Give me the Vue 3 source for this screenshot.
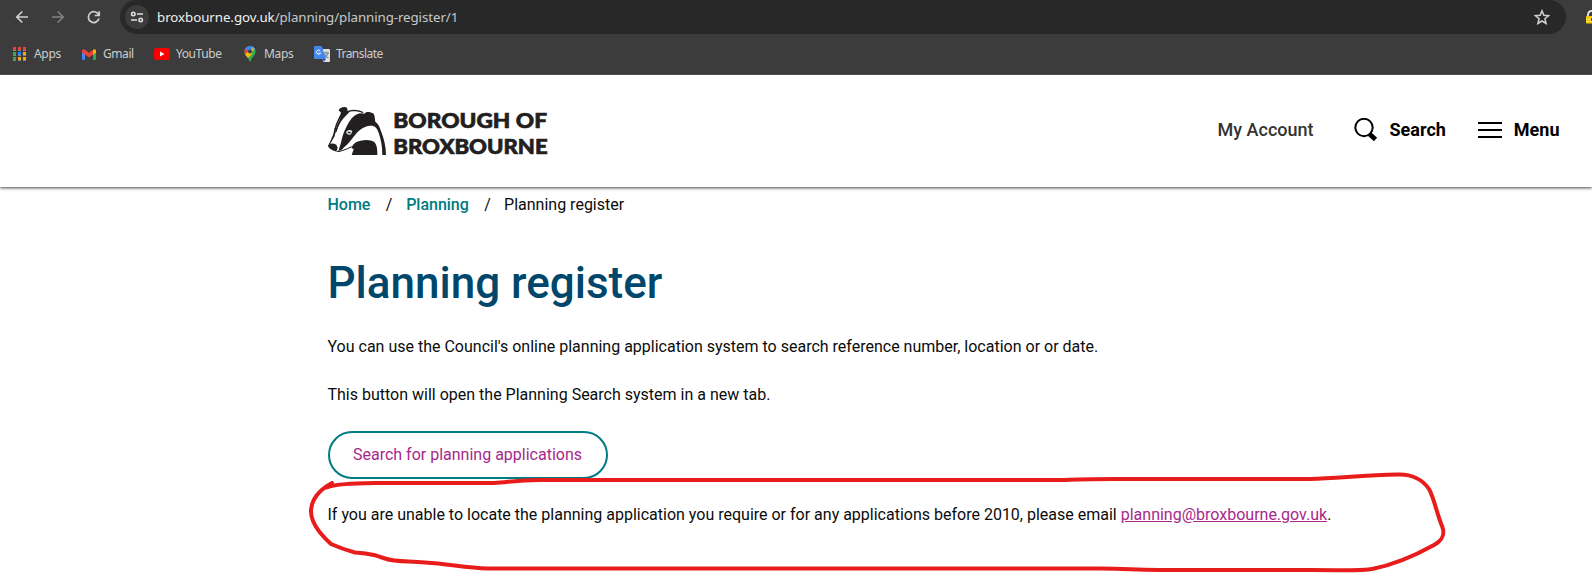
<script setup>
const outline =
  'M332 483 L326 487.500 C337 484 350 483.500 375 483 H494 C508 482.500 515 480 540 480 H1065 C1080 479 1095 479 1115 479 H1310 C1340 478 1365 475 1398 474.500 C1412 474 1423 480 1429 489 C1434 498 1437 514 1442 526 C1446 536 1441 541 1434 545 C1416 555 1393 565 1372 569 C1362 571 1345 570 1310 570 H1160 C1130 570 1130 568.500 1100 568.500 H488 C465 568 450 564 425 562.500 C405 561 395 562 385 558.500 C375 555 372 554 355 552.500 Q342 549 331 544 C321 535 315 526 313 521 C307 506 315 492 332 483'
</script>

<template>
  <div class="page">
    <div class="browser">
      <div class="toolbar">
        <svg class="nav" width="120" height="34" viewBox="0 0 120 34" fill="none" stroke-width="1.7">
          <path d="M28 17H17M22.300 11.500L16.800 17l5.500 5.500" stroke="#d0d0d0" />
          <path d="M52 17h11M57.700 11.500l5.500 5.500-5.500 5.500" stroke="#828282" />
          <path d="M98.500 14.500A5.400 5.400 0 1 0 99 18.500M99.200 11.200v4.300h-4.500" stroke="#d0d0d0" />
        </svg>
        <div class="address">
          <svg class="site" width="24" height="24" viewBox="0 0 24 24" fill="none" stroke="#dedede" stroke-width="1.600">
            <circle cx="12" cy="12" r="12" fill="#3c3c3c" stroke="none" />
            <circle cx="8.300" cy="9" r="1.700" /><path d="M12 9h6M6 15h6" /><circle cx="15.700" cy="15" r="1.700" />
          </svg>
          <span class="url"><span class="host">broxbourne.gov.uk</span>/planning/planning-register/1</span>
          <svg class="star" width="16" height="16" viewBox="0 0 16 16" fill="none" stroke="#d0d0d0" stroke-width="1.500">
            <path d="M8 1.800l1.800 4.500 4.800.4-3.700 3.100 1.200 4.700L8 12l-4.100 2.500 1.200-4.700L1.400 6.700l4.800-.4z" />
          </svg>
        </div>
        <svg class="lock" width="6" height="16" viewBox="0 0 6 16">
          <path d="M2 8V5.500Q2.500 1.800 6 1.800" fill="none" stroke="#e8e8e8" stroke-width="1.800" />
          <rect y="7" width="8" height="7.500" rx=".7" fill="#f5c400" /><path d="M0 10h6M0 12.500h6" stroke="#ffe45b" /><path d="M5 9h1v3H5z" fill="#6d5300" />
        </svg>
      </div>
      <div class="bookmarks">
        <span class="mark apps">
          <svg width="13" height="14" viewBox="0 0 13 14">
            <path d="M0 0h3v3H0zM5 0h3v3H5zM10 0h3v3h-3z" fill="#ee4035" />
            <path d="M0 5h3v3H0zM0 10h3v3H0z" fill="#34a853" /><path d="M5 5h3v3H5z" fill="#2684fc" />
            <path d="M10 5h3v3h-3zM5 10h3v3H5zM10 10h3v3h-3z" fill="#fbab05" />
            <path d="M0 3.500h3m2 0h3m2 0h3M0 8.500h3m2 0h3m2 0h3M0 13.500h3m2 0h3m2 0h3" stroke="#858585" />
          </svg><span>Apps</span></span>
        <span class="mark gmail">
          <svg width="14" height="11" viewBox="0 0 14 11">
            <path d="M0 2l3 2v7H1Q0 11 0 10z" fill="#4285f4" /><path d="M11 4l3-2v8q0 1-1 1h-2z" fill="#34a853" />
            <path d="M11 .8Q14-.8 14 2v1.500l-3 2.300z" fill="#fbbc04" /><path d="M0 3.500V2Q0-.8 3 .8l4 3 4-3v5L7 8.500 3 5.800z" fill="#ea4335" />
          </svg><span>Gmail</span></span>
        <span class="mark youtube">
          <svg width="16" height="12" viewBox="0 0 16 12"><rect width="16" height="12" rx="3" fill="#f00" /><path d="M6 3.500L10.500 6 6 8.500z" fill="#fff" /></svg><span>YouTube</span></span>
        <span class="mark maps">
          <svg width="12" height="16" viewBox="0 0 12 16">
            <clipPath id="pin"><path d="M6 0a5.600 5.600 0 0 1 5.600 5.600C11.600 10 7.800 10.500 6.800 15q-.8 1.500-1.500 0C4.500 11 .4 10 .4 5.600A5.600 5.600 0 0 1 6 0z" /></clipPath>
            <g clip-path="url(#pin)"><path d="M0 0h12v16H0z" fill="#34a853" /><path d="M0 0h12L6 6 0 5z" fill="#4285f4" /><path d="M8 0h4v3L8 5z" fill="#72aaff" /><path d="M0 2l5 3-4 5H0z" fill="#ea4335" /><path d="M0 9l9-7-1 6-5 5z" fill="#fbbc04" /></g>
            <circle cx="6" cy="5.500" r="2" fill="#303b4d" />
          </svg><span>Maps</span></span>
        <span class="mark translate">
          <svg width="16" height="16" viewBox="0 0 16 16">
            <path d="M8 3h7q1 0 1 1v11q0 1-1 1H9z" fill="#dedede" /><path d="M9 7h6M12 5.500V7m2 0q-1 4-4 5m.5-4q1 3 4 4" stroke="#667c83" fill="none" />
            <path d="M1 0h6l1 1 4 12H1q-1 0-1-1V1q0-1 1-1z" fill="#4687ee" /><path d="M8.500 13H12l-2.300 3z" fill="#2759bd" />
            <path d="M6.300 5A2.100 2.100 0 1 0 6.500 7H4.600" stroke="#fff" fill="none" />
          </svg><span>Translate</span></span>
      </div>
    </div>

    <header class="header">
      <svg class="logo" width="226" height="62" viewBox="39 30 678 186" fill="#231f20">
        <path d="M41 148C46 140 49 130 54 120C58 105 60 91 67 77C73 65 76 59 78 53L71 46C73 38 87 33 96 38L98 48C114 42 134 44 146 52L143 54C132 49 115 48 105 50C93 53 82 61 73 75C64 91 62 111 59 124C51 137 49 142 45 148z" />
        <path d="M75 73C80 60 91 52 105 49L97 58C82 71 72 88 66 105L61 117C62 99 67 85 75 73z" />
        <path d="M39 150Q51 142 64 149L68 158Q67 167 61 169C50 165 39 160 39 150z" />
        <path d="M70 169L78 143C82 123 86 111 93 98C102 80 110 66 123 59Q136 53 148 56C153 48 166 50 176 56C180 63 179 70 181 80C191 87 194 96 199 111C207 132 213 155 213 180H202C202 155 198 133 191 113C186 98 179 91 166 92C144 93 127 110 117 124C107 137 98 149 89 155L80 164z" />
        <path d="M94 110Q101 101 112 108L108 118Q98 121 94 114z" fill="#fff" /><path d="M98 110h9v5h-9z" />
        <path d="M110 180L116 163L109 158Q118 139 137 137C157 133 173 136 180 143C187 153 187 167 187 180z" />
        <path d="M60 167Q72 173 84 166Q97 162 110 155M57 103l9-3-2 9-5 1" fill="none" stroke="#231f20" stroke-width="3" />
        <text x="235" y="99" textLength="461" lengthAdjust="spacingAndGlyphs">BOROUGH OF</text>
        <text x="235" y="178" textLength="463" lengthAdjust="spacingAndGlyphs">BROXBOURNE</text>
      </svg>
      <nav class="actions">
        <span class="account">My Account</span>
        <span class="action search"><svg width="24" height="24" viewBox="0 0 24 24"><circle cx="10" cy="9.500" r="8.700" fill="none" stroke="#000" stroke-width="2" /><path d="M15.500 16l6 5.500" stroke="#000" stroke-width="4.800" /></svg>Search</span>
        <span class="action menu"><svg width="24" height="16" viewBox="0 0 24 16"><path d="M0 1h24M0 8h24M0 15h24" stroke="#000" stroke-width="2" /></svg>Menu</span>
      </nav>
    </header>

    <main class="content">
      <nav class="crumbs"><a>Home</a><span class="slash">/</span><a>Planning</a><span class="slash">/</span><span>Planning register</span></nav>
      <h1>Planning register</h1>
      <p class="intro">You can use the Council's online planning application system to search reference number, location or or date.</p>
      <p class="hint">This button will open the Planning Search system in a new tab.</p>
      <a class="button">Search for planning applications</a>
      <p class="contact">If you are unable to locate the planning application you require or for any applications before 2010, please email <a>planning@broxbourne.gov.uk</a>.</p>
    </main>

    <svg class="marker" width="1592" height="580" viewBox="0 0 1592 580"><path :d="outline" /></svg>
  </div>
</template>

<style>
body { margin: 0; }
</style>

<style scoped>
.page { position: relative; width: 1592px; height: 580px; overflow: hidden; background: #fff; color: #0b0c0c; font-family: Roboto, sans-serif; }
.browser { height: 75px; box-sizing: border-box; background: #3c3c3c; border-bottom: 1px solid #505050; font-family: "Noto Sans", sans-serif; }
.toolbar { display: flex; height: 34px; }
.nav { flex: none; }
.address { display: flex; align-items: center; box-sizing: border-box; width: 1446px; height: 34px; padding: 0 16px 0 5px; border-radius: 17px; background: #282828; flex: none; }
.url { margin-left: 8px; font-size: 13.3px; letter-spacing: -0.08px; line-height: 20px; color: #c9c9c9; white-space: nowrap; }
.host { color: #f0f0f0; letter-spacing: -0.05px; }
.star { margin-left: auto; }
.lock { margin: 9px 0 0 20px; }
.bookmarks { display: flex; align-items: center; height: 40px; padding-left: 13px; }
.mark { display: flex; align-items: center; flex: none; font-size: 12px; letter-spacing: -0.42px; color: #cdcdcd; white-space: nowrap; }
.mark span { margin-top: -1px; }
.apps { width: 69px; gap: 8px; letter-spacing: -0.3px; }
.gmail { width: 72px; gap: 7px; }
.youtube { width: 90px; gap: 6px; }
.maps { width: 70px; gap: 8px; letter-spacing: -0.3px; }
.translate { gap: 6px; letter-spacing: -0.55px; }
.header { display: flex; align-items: flex-start; box-sizing: border-box; height: 112px; padding: 30px 32.5px 0 328px; box-shadow: 0 1px 3px #444; }
.logo { overflow: visible; }
.logo text { font-family: Lato, sans-serif; font-size: 62px; font-weight: 900; stroke: #231f20; stroke-width: 2px; }
.actions { display: flex; margin: 11px 0 0 auto; height: 26px; align-items: center; font-size: 18px; color: #000; }
.action svg { position: relative; top: 1px; }
.account { margin-right: 40px; color: #333; font-weight: 500; }
.action { display: flex; align-items: center; font-weight: 700; }
.search { gap: 12px; margin-right: 32px; }
.menu { gap: 12px; }
.content { padding-left: 327.5px; font-size: 16px; line-height: 24px; }
.crumbs { display: flex; padding-top: 6px; height: 24px; }
.crumbs a { color: #007b7f; font-weight: 500; letter-spacing: -0.02px; }
.slash { margin: 0 13.7px 0 15.5px; }
.crumbs > span:last-child { margin-left: -0.5px; }
h1 { margin: 39px 0 0; font-size: 44px; line-height: 54px; font-weight: 500; color: #00476b; }
p { margin: 0; white-space: nowrap; }
.intro { padding-top: 25px; }
.hint { padding-top: 24px; }
.button { display: flex; align-items: center; justify-content: center; box-sizing: border-box; width: 280px; height: 48px; margin-top: 24px; border: 2px solid #007b82; border-radius: 24px; color: #a6298a; }
.contact { padding-top: 24px; }
.contact a { color: #a6298a; text-decoration: underline; }
.marker { position: absolute; left: 0; top: 0; fill: none; stroke: #e91c1c; stroke-width: 4; stroke-linecap: round; stroke-linejoin: round; }
</style>
